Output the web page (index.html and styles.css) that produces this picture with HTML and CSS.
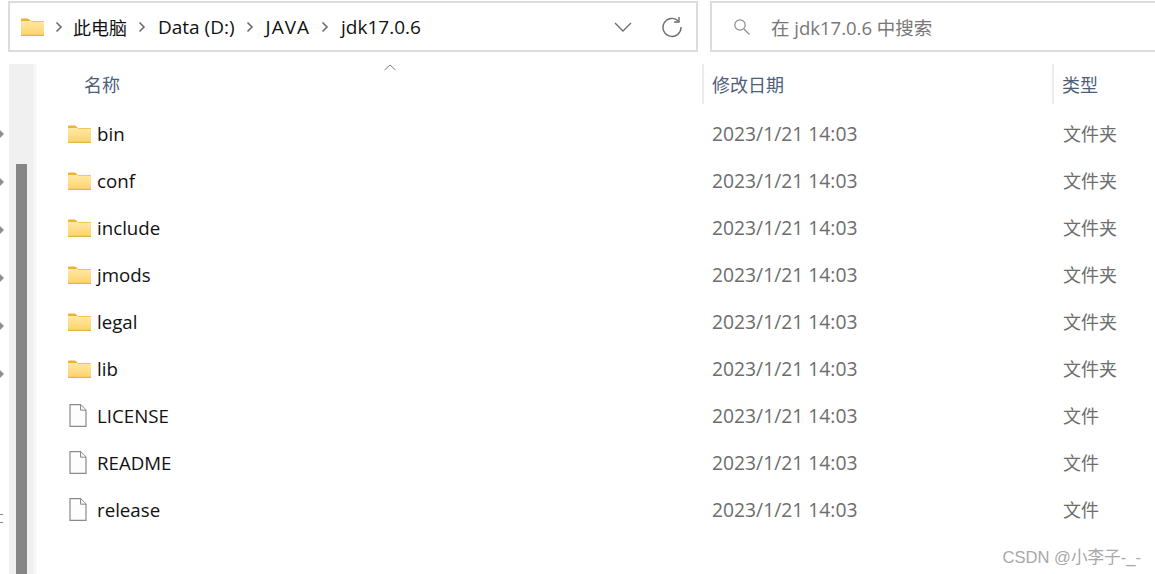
FILE: index.html
```html
<!DOCTYPE html>
<html lang="zh-CN">
<head>
    <meta charset="UTF-8">
    <meta name="viewport" content="width=device-width, initial-scale=1.0">
    <title>jdk17.0.6</title>
    <link rel="stylesheet" href="styles.css">
</head>
<body>
    <svg class="defs" width="0" height="0">
        <defs>
            <linearGradient id="folderFill" x1="0" y1="0" x2="0" y2="1">
                <stop offset="0" stop-color="#ffe9a6"/>
                <stop offset="1" stop-color="#fdd267"/>
            </linearGradient>
            <symbol id="folder" viewBox="0 0 23 18">
                <path d="M0 1.5 Q0 0.5 1 0.5 H7 L10 3 H0 Z" fill="#eeb22e"/>
                <rect x="0" y="3" width="23" height="15" fill="url(#folderFill)"/>
                <rect x="0" y="16.8" width="23" height="1.2" fill="#e8b445"/>
                <rect x="10" y="3" width="13" height="1" fill="#f7c64f"/>
            </symbol>
            <symbol id="file" viewBox="0 0 18 23">
                <path d="M1 .7 H11.5 L17 6.2 V22.3 H1 Z" fill="#fdfdfd" stroke="#8a8a8a" stroke-width="1.2"/>
                <path d="M11.5 .7 V6.2 H17" fill="#f2f2f2" stroke="#8a8a8a" stroke-width="1"/>
            </symbol>
            <symbol id="crumb" viewBox="0 0 8 12">
                <path d="M1.5 1.5 L6 6 L1.5 10.5" fill="none" stroke="#6b6b6b" stroke-width="1.6"/>
            </symbol>
        </defs>
    </svg>

    <div class="toolbar">
        <div class="address">
            <svg class="crumb-folder" width="23" height="18"><use href="#folder"/></svg>
            <svg class="crumb-sep" width="8" height="12"><use href="#crumb"/></svg>
            <span class="crumb crumb-cjk">此电脑</span>
            <svg class="crumb-sep" width="8" height="12"><use href="#crumb"/></svg>
            <span class="crumb">Data (D:)</span>
            <svg class="crumb-sep" width="8" height="12"><use href="#crumb"/></svg>
            <span class="crumb crumb-caps">JAVA</span>
            <svg class="crumb-sep" width="8" height="12"><use href="#crumb"/></svg>
            <span class="crumb">jdk17.0.6</span>
            <svg class="history" width="18" height="10" viewBox="0 0 18 10">
                <path d="M1 1 L9 9 L17 1" fill="none" stroke="#6e6e6e" stroke-width="1.4"/>
            </svg>
            <svg class="refresh" width="22" height="22" viewBox="0 0 22 22">
                <path d="M17.5 5.2 A9 9 0 1 0 20 11" fill="none" stroke="#6e6e6e" stroke-width="1.4"/>
                <path d="M18 1 V6 H13" fill="none" stroke="#6e6e6e" stroke-width="1.4"/>
            </svg>
        </div>
        <div class="search">
            <svg class="search-icon" width="18" height="18" viewBox="0 0 18 18">
                <circle cx="7" cy="7" r="5.2" fill="none" stroke="#8c8c8c" stroke-width="1.2"/>
                <path d="M11 11 L16.5 16.5" stroke="#8c8c8c" stroke-width="1.2"/>
            </svg>
            <span>在 jdk17.0.6 中搜索</span>
        </div>
    </div>

    <div class="main">
        <div class="tree-edge">
            <i></i><i></i><i></i><i></i><i></i><i></i>
            <b></b>
        </div>
        <div class="scroll-track"><div class="scroll-thumb"></div></div>
        <div class="pane">
            <div class="head">
                <div class="head-name">名称
                    <svg class="sort" width="12" height="7" viewBox="0 0 12 7">
                        <path d="M.5 6 L6 1 L11.5 6" fill="none" stroke="#7d7d7d" stroke-width="1"/>
                    </svg>
                </div>
                <div class="head-date">修改日期</div>
                <div class="head-type">类型</div>
            </div>
            <div id="fileList"></div>
        </div>
    </div>

    <div class="watermark">CSDN @小李子-_-</div>

    <script>
        var files = [
            { name: 'bin', icon: 'folder', type: '文件夹' },
            { name: 'conf', icon: 'folder', type: '文件夹' },
            { name: 'include', icon: 'folder', type: '文件夹' },
            { name: 'jmods', icon: 'folder', type: '文件夹' },
            { name: 'legal', icon: 'folder', type: '文件夹' },
            { name: 'lib', icon: 'folder', type: '文件夹' },
            { name: 'LICENSE', icon: 'file', type: '文件' },
            { name: 'README', icon: 'file', type: '文件' },
            { name: 'release', icon: 'file', type: '文件' }
        ];

        var fileList = document.getElementById('fileList');
        files.forEach(function(file) {
            var row = document.createElement('div');
            row.className = 'row';
            var size = file.icon === 'folder' ? 'width="23" height="18"' : 'width="18" height="23"';
            row.innerHTML = `
                <div class="row-name">
                    <span class="icon-box icon-${file.icon}"><svg ${size}><use href="#${file.icon}"/></svg></span>
                    <span>${file.name}</span>
                </div>
                <div class="row-date">2023/1/21 14:03</div>
                <div class="row-type">${file.type}</div>
            `;
            fileList.appendChild(row);
        });
    </script>
</body>
</html>
```

FILE: styles.css
```css
body {
    font-family: "Open Sans", "Noto Sans CJK SC", sans-serif;
    font-size: 18px;
    background-color: #fff;
    color: #111;
    margin: 0;
    height: 574px;
    overflow: hidden;
    position: relative;
}
.defs {
    display: block;
}
.toolbar {
    display: flex;
    gap: 12px;
    padding: 1px 0 0 8px;
}
.address {
    width: 690px;
    height: 51px;
    box-sizing: border-box;
    border: 2px solid #dcdcdc;
    display: flex;
    align-items: center;
    padding-left: 11px;
}
.crumb-folder {
    margin-right: 11px;
}
.crumb-sep {
    margin: 0 12px 0 0;
}
.crumb {
    font-size: 19px;
    margin-right: 11px;
}
.crumb-cjk {
    font-size: 18px;
    margin-left: -2px;
}
.crumb-caps {
    letter-spacing: 1px;
}
.history {
    margin-left: auto;
}
.refresh {
    margin: 0 13px 0 29px;
}
.search {
    flex: 1;
    height: 51px;
    box-sizing: border-box;
    border: 2px solid #dcdcdc;
    border-right: none;
    display: flex;
    align-items: center;
    padding-left: 21px;
    color: #777;
    font-size: 18.5px;
}
.search-icon {
    margin-right: 20px;
}
.main {
    display: flex;
    height: 510px;
    margin-top: 12px;
}
.tree-edge {
    width: 9px;
    padding-top: 66px;
    display: flex;
    flex-direction: column;
    gap: 40px;
}
.tree-edge i {
    display: block;
    width: 0;
    height: 0;
    border-top: 4px solid transparent;
    border-bottom: 4px solid transparent;
    border-left: 4px solid #8f8f8f;
}
.tree-edge b {
    display: block;
    width: 3px;
    height: 9px;
    margin-top: 96px;
    border-top: 1px solid #888;
    border-bottom: 1px solid #888;
    box-sizing: border-box;
}
.scroll-track {
    width: 25px;
    background-color: #f0f0f0;
    border-right: 3px solid #f8f8f8;
    padding-top: 100px;
    box-sizing: content-box;
}
.scroll-thumb {
    width: 11px;
    height: 410px;
    margin-left: 7px;
    background-color: #868686;
}
.pane {
    flex: 1;
}
.head {
    display: grid;
    grid-template-columns: 665px 350px 1fr;
    height: 46px;
    align-items: start;
    color: #4c607a;
}
.head-name {
    padding-left: 47px;
    line-height: 42px;
    height: 40px;
    position: relative;
}
.sort {
    position: absolute;
    left: 347px;
    top: 0;
}
.head-date,
.head-type {
    height: 40px;
    border-left: 2px solid #ececec;
    padding-left: 8px;
    line-height: 42px;
}
.row {
    display: grid;
    grid-template-columns: 675px 351px 1fr;
    height: 47px;
    align-items: center;
}
.row-name {
    display: flex;
    align-items: center;
    padding-left: 31px;
    font-size: 18.7px;
}
.icon-box {
    width: 29px;
    display: flex;
}
.icon-file {
    padding-left: 1px;
    width: 28px;
}
.row-date {
    font-size: 19.3px;
    color: #6d6d6d;
}
.row-type {
    color: #6d6d6d;
    margin-top: -2px;
}
.watermark {
    position: absolute;
    right: 14px;
    top: 544px;
    font-family: "Liberation Sans", "Noto Sans CJK SC", sans-serif;
    font-size: 16.6px;
    color: #a8a8a8;
}
```
